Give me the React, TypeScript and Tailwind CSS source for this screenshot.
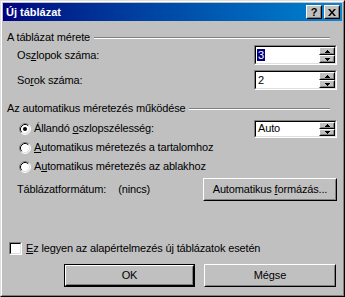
import type { ReactNode } from "react";

const Raised = ({ className = "", children }: { className?: string; children?: ReactNode }) => (
  <div
    className={`border border-t-white border-l-white border-r-black border-b-black bg-[#c0c0c0] ${className}`}
  >
    <div className="flex h-full w-full items-center justify-center border border-t-[#c0c0c0] border-l-[#c0c0c0] border-r-[#808080] border-b-[#808080]">
      {children}
    </div>
  </div>
);

const Sunken = ({ className = "", children }: { className?: string; children?: ReactNode }) => (
  <div
    className={`border border-t-[#808080] border-l-[#808080] border-r-white border-b-white ${className}`}
  >
    <div className="flex h-full w-full items-center border border-t-black border-l-black border-r-[#dfdfdf] border-b-[#dfdfdf] bg-white">
      {children}
    </div>
  </div>
);

const Arrow = ({ up }: { up?: boolean }) => (
  <svg width="5" height="3" viewBox="0 0 5 3">
    <path d={up ? "M2 0h1v1h1v1h1v1H0V2h1V1h1z" : "M0 0h5v1H4v1H3v1H2V2H1V1H0z"} fill="black" />
  </svg>
);

const SpinButtons = () => (
  <div className="flex h-full w-[16px] flex-col">
    <Raised className="h-1/2 w-full">
      <Arrow up />
    </Raised>
    <Raised className="h-1/2 w-full">
      <Arrow />
    </Raised>
  </div>
);

const SpinField = ({ value, selected }: { value: string; selected?: boolean }) => (
  <Sunken className="h-[20px] w-[83px]">
    <span className="ml-px flex-1 leading-[13px]">
      <span className={selected ? "bg-[#000080] px-px text-white" : "px-px"}>{value}</span>
    </span>
    <SpinButtons />
  </Sunken>
);

const Radio = ({ checked }: { checked?: boolean }) => (
  <svg width="12" height="12" viewBox="0 0 12 12" className="shrink-0">
    <circle cx="6" cy="6" r="5" fill="white" />
    <path d="M2.11 9.89A5.5 5.5 0 0 1 9.89 2.11" stroke="#808080" fill="none" />
    <path d="M9.89 2.11A5.5 5.5 0 0 1 2.11 9.89" stroke="white" fill="none" />
    <path d="M2.82 9.18A4.5 4.5 0 0 1 9.18 2.82" stroke="black" fill="none" />
    <path d="M9.18 2.82A4.5 4.5 0 0 1 2.82 9.18" stroke="#dfdfdf" fill="none" />
    {checked && <circle cx="6" cy="6" r="2" fill="black" />}
  </svg>
);

const GroupHeader = ({ title, className = "" }: { title: string; className?: string }) => (
  <div className={`flex h-[13px] items-center ${className}`}>
    <span className="whitespace-nowrap">{title}</span>
    <div className="ml-[4px] mr-[7px] h-[2px] flex-1 border-t border-b border-t-[#808080] border-b-white" />
  </div>
);

const RadioRow = ({ checked, children }: { checked?: boolean; children: ReactNode }) => (
  <div className="flex h-[19px] items-center">
    <div className="ml-[12px] flex items-center gap-[3px]">
      <Radio checked={checked} />
      <span className="whitespace-nowrap">{children}</span>
    </div>
  </div>
);

export default function App() {
  return (
    <div className="h-[297px] w-[345px] border border-t-[#dfdfdf] border-l-[#dfdfdf] border-r-black border-b-black bg-[#c0c0c0] font-['Liberation_Sans',Arial,sans-serif] text-[11px] leading-[13px] tracking-[-0.15px] text-black">
      <div className="flex h-full flex-col border border-t-white border-l-white border-r-[#808080] border-b-[#808080] p-px">
        {/* title bar */}
        <div className="flex h-[18px] items-center justify-between bg-gradient-to-r from-[#000080] to-[#1084d0] pl-[3px] pr-[2px]">
          <span className="text-[11px] font-bold tracking-normal text-white">Új táblázat</span>
          <div className="flex gap-[2px]">
            <Raised className="h-[14px] w-[16px]">
              <span className="text-[11px] font-bold leading-none">?</span>
            </Raised>
            <Raised className="h-[14px] w-[16px]">
              <svg width="8" height="7" viewBox="0 0 8 7">
                <path d="M0 0h2l2 2.5L6 0h2L5 3.5 8 7H6L4 4.5 2 7H0l3-3.5z" fill="black" />
              </svg>
            </Raised>
          </div>
        </div>

        <div className="flex flex-1 flex-col pl-[4px] pr-[5px]">
          <GroupHeader title="A táblázat mérete" className="mt-[10px]" />

          <div className="mt-px flex items-center justify-between">
            <span className="ml-[10px]">
              Os<u>z</u>lopok száma:
            </span>
            <SpinField value="3" selected />
          </div>
          <div className="mt-[5px] flex items-center justify-between">
            <span className="ml-[10px]">
              So<u>r</u>ok száma:
            </span>
            <SpinField value="2" />
          </div>

          <GroupHeader title="Az automatikus méretezés működése" className="mt-[12px]" />

          <div className="mt-[4px] flex items-center justify-between">
            <RadioRow checked>
              Állandó <u>o</u>szlopszélesség:
            </RadioRow>
            <Sunken className="h-[18px] w-[83px]">
              <span className="ml-[2px] flex-1">Auto</span>
              <SpinButtons />
            </Sunken>
          </div>
          <RadioRow>
            <u>A</u>utomatikus méretezés a tartalomhoz
          </RadioRow>
          <RadioRow>
            A<u>u</u>tomatikus méretezés az ablakhoz
          </RadioRow>

          <div className="mt-[2px] flex items-center">
            <span className="ml-[10px] whitespace-nowrap">Táblázatformátum:</span>
            <span className="ml-[12px] flex-1 whitespace-nowrap">(nincs)</span>
            <Raised className="h-[23px] w-[134px]">
              <span>
                Automatikus <u>f</u>ormázás...
              </span>
            </Raised>
          </div>

          <div className="mt-[41px] flex items-center gap-[4px]">
            <Sunken className="ml-[2px] h-[13px] w-[13px]" />
            <span>
              <u>E</u>z legyen az alapértelmezés új táblázatok esetén
            </span>
          </div>

          <div className="ml-[57px] mt-[9px] flex gap-[9px]">
            <div className="border border-black">
              <Raised className="h-[21px] w-[129px]">
                <span>OK</span>
              </Raised>
            </div>
            <Raised className="h-[23px] w-[132px]">
              <span>Mégse</span>
            </Raised>
          </div>
        </div>
      </div>
    </div>
  );
}
